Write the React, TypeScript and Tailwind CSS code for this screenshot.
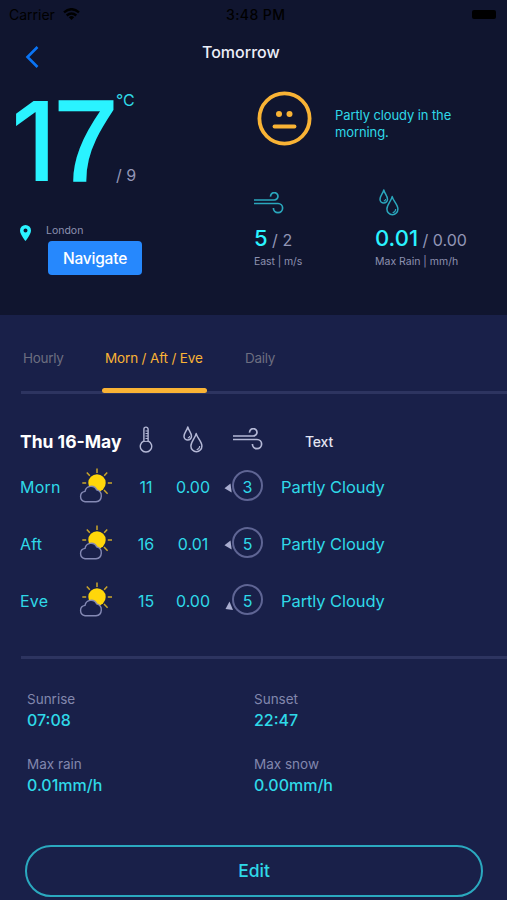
import type { ReactNode } from "react";

function Wind({ className }: { className: string }) {
  return (
    <svg viewBox="0 0 30 22" className={className} fill="none" stroke="currentColor" strokeWidth="1.7">
      <path d="M0 8H20.2A3.7 3.7 0 1 0 16.600 4.600" />
      <path d="M0 11.500H24A4.600 4.600 0 1 1 19.400 16.100" />
    </svg>
  );
}

function Drops({ className }: { className: string }) {
  return (
    <svg viewBox="0 0 20 27" className={className} fill="none" stroke="currentColor" strokeWidth="1.5" strokeLinejoin="round">
      <path d="M4.8 1C4 4.400 1 7 1 10.200A3.750 3.750 0 0 0 8.500 10.200C8.500 7 5.600 4.400 4.800 1Z" />
      <path d="M13.200 7.600C12.200 12 7.900 15.600 7.900 20A5.500 5.800 0 0 0 18.900 20C18.900 15.600 14.200 12 13.200 7.600Z" />
      <path d="M13.600 23.700Q16.600 23 16.700 20M4.800 12.100Q6.600 11.800 6.700 10" strokeWidth="1.100" />
    </svg>
  );
}

function Thermometer({ className }: { className: string }) {
  return (
    <svg viewBox="0 0 14 27" className={className} fill="none" stroke="currentColor" strokeWidth="1.4">
      <path d="M4.900 15V3.200A2.100 2.100 0 0 1 9.100 3.200V15A5.700 5.700 0 1 1 4.900 15Z" />
      <path d="M6.500 5H9M6.500 7.500H9M6.500 10H9M6.500 12.500H9M5 15.400H9" strokeWidth="1" />
    </svg>
  );
}

function SunCloud() {
  return (
    <svg viewBox="0 0 34 36" className="-mt-[3px] h-9 w-[34px]" fill="none">
      <circle cx="18" cy="16" r="8.700" fill="#ffd60a" />
      <path
        d="M18 1.500V6M7.800 5.500L10.800 8.700M28.200 5.500L25.200 8.700M3.300 15.900H7.200M28.800 15.900H33M25 23L28.600 26.800"
        stroke="#c9a52b"
        strokeWidth="1.500"
      />
      <path
        d="M6.100 34.700A5.200 5.200 0 0 1 6 24.400A6.200 6.200 0 0 1 17.700 22.900A6 6 0 0 1 17 34.700Z"
        fill="#192049"
        stroke="#8489b4"
        strokeWidth="1.400"
      />
    </svg>
  );
}

function WindBadge({ value, low }: { value: string; low?: boolean }) {
  return (
    <div className="relative flex h-[31px] w-[31px] items-center justify-center rounded-full border-2 border-[#5f6594] pt-[3px] text-[#2fd9e8]">
      {value}
      <svg viewBox="0 0 8 10" className={low ? "absolute top-[15px] -left-[9px] h-[10px] w-2" : "absolute top-[11px] -left-[10px] h-[10px] w-2"} fill="#a9adcf">
        {low ? <path d="M4.500 0.500L8 9L0.500 8Z" /> : <path d="M0.500 5.300L6.500 0.500L7.700 9.500Z" />}
      </svg>
    </div>
  );
}

const rows = [
  { part: "Morn", temp: "11", rain: "0.00", wind: "3" },
  { part: "Aft", temp: "16", rain: "0.01", wind: "5" },
  { part: "Eve", temp: "15", rain: "0.00", wind: "5", low: true },
];

function Fact({ label, children }: { label: string; children: ReactNode }) {
  return (
    <div className="h-[65px]">
      <div className="pt-px text-[13.500px] leading-[21px] text-[#8287ad]">{label}</div>
      <div className="text-[16px] leading-[21px] font-medium text-[#2fd9e8]">{children}</div>
    </div>
  );
}

export default function App() {
  return (
    <div className="h-[900px] w-[507px] overflow-hidden bg-[#192049] font-['Inter',sans-serif] whitespace-nowrap">
      <header className="h-[315px] bg-[#10152f]">
        <div className="flex h-7 items-center pr-[11px] pl-[9px] text-black">
          <div className="flex w-[217px] items-center gap-2">
            <span className="text-[14px]">Carrier</span>
            <svg viewBox="0 0 17 12" className="h-3 w-[17px]" fill="none" stroke="currentColor" strokeWidth="2.400">
              <path d="M1 4.400Q8.500 -2 16 4.400M3.700 7.500Q8.500 3.400 13.300 7.500" />
              <path d="M5.800 9.200Q8.500 7 11.200 9.200L8.500 12Z" fill="currentColor" stroke="none" />
            </svg>
          </div>
          <span className="text-[14px] font-medium tracking-[0.4px]">3:48 PM</span>
          <span className="ml-auto h-[9px] w-6 rounded-[2px] bg-black" />
        </div>
        <div className="flex h-12 items-center">
          <svg viewBox="0 0 14 22" className="mt-[9px] ml-[25px] h-[22px] w-[14px]" fill="none" stroke="#0a74f5" strokeWidth="2.600">
            <path d="M12.500 1L2.500 11L12.500 21" />
          </svg>
          <h1 className="ml-[163px] text-[16px] font-medium text-[#eceef8]">Tomorrow</h1>
        </div>

        <div className="flex">
          <div className="w-[254px]">
            <div className="flex h-[130px]">
              <div className="flex w-[116px] pl-[11px] leading-[130px] text-[#2af3ff]">
                <span className="w-[43px] text-[110px] font-medium">1</span>
                <span className="font-['Liberation_Sans',sans-serif] text-[115px] tracking-[-3px] [-webkit-text-stroke:2.5px_#2af3ff]">7</span>
              </div>
              <div className="text-[16px]">
                <div className="mt-[14px] leading-5 text-[#2fd9e8]">°C</div>
                <div className="mt-[55px] leading-5 text-[#9296b6]">/ 9</div>
              </div>
            </div>
            <div className="flex pt-[16px] pl-5">
              <svg viewBox="0 0 12 16" className="mt-[3px] h-4 w-3" fill="#2af3ff">
                <path fillRule="evenodd" d="M5.500 0A5.500 5.500 0 0 0 0 5.500C0 9.600 5.500 16 5.500 16S11 9.600 11 5.500A5.500 5.500 0 0 0 5.500 0ZM5.500 3.500A2 2 0 1 1 5.500 7.500A2 2 0 1 1 5.500 3.500Z" />
              </svg>
              <div className="ml-[14px]">
                <div className="h-[19px] pt-px text-[10.500px] leading-4 text-[#8d91b0]">London</div>
                <button className="ml-[2px] block h-[34px] w-[94px] rounded-[4px] bg-[#2688fd] pt-px text-[15.500px] font-medium tracking-[-0.200px] text-white">Navigate</button>
              </div>
            </div>
          </div>

          <div>
            <div className="flex h-[112px]">
              <svg viewBox="0 0 56 56" className="mt-[15px] ml-[2px] h-14 w-14" fill="none" stroke="#f9b335" strokeWidth="3.800">
                <circle cx="28.500" cy="27.500" r="25.100" />
                <path d="M18.500 35.500H38.500" strokeLinecap="round" />
                <circle cx="23" cy="23" r="3" fill="#f9b335" stroke="none" />
                <circle cx="33.500" cy="23" r="3" fill="#f9b335" stroke="none" />
              </svg>
              <p className="mt-[31px] ml-[23px] text-[13px] leading-[17px] tracking-[-0.100px] text-[#2fd9e8]">
                Partly cloudy in the
                <br />
                morning.
              </p>
            </div>
            <div className="flex">
              <div className="w-[121px]">
                <Wind className="mt-1 mb-3 h-[22px] w-[30px] text-[#2aa7bd]" />
                <div className="leading-6 text-[#9296b6]">
                  <span className="text-[22px] font-medium text-[#2af3ff]">5</span>
                  <span className="text-[16px]"> / 2</span>
                </div>
                <div className="text-[10.500px] leading-[19px] tracking-[-0.100px] text-[#8d91b0]">East | m/s</div>
              </div>
              <div>
                <Drops className="mt-[1px] mb-[10px] ml-1 h-[27px] w-5 text-[#2aa7bd]" />
                <div className="leading-6 text-[#9296b6]">
                  <span className="text-[22px] font-medium text-[#2af3ff]">0.01</span>
                  <span className="text-[16px]"> / 0.00</span>
                </div>
                <div className="text-[10.500px] leading-[19px] text-[#8d91b0]">Max Rain | mm/h</div>
              </div>
            </div>
          </div>
        </div>
      </header>

      <nav className="ml-[21px] flex h-[79px] border-b-[3px] border-[#2d3460] pt-[33px] text-[13.500px] leading-[21px] tracking-[-0.150px] text-[#6c6e80]">
        <span className="ml-[2px] w-[79px] tracking-[-0.300px]">Hourly</span>
        <span className="-mb-[2px] flex w-[105px] flex-col justify-between text-[#f9b335]">
          <span className="ml-[3px]">Morn / Aft / Eve</span>
          <span className="h-[5px] rounded-full bg-[#f9b335]" />
        </span>
        <span className="ml-[38px] tracking-[-0.300px]">Daily</span>
      </nav>

      <section className="h-[262px] pl-5 text-[16px]">
        <div className="flex h-[64px] items-center pt-[30px] text-[#b4b8d6]">
          <span className="w-[119px] pt-[3px] text-[17.500px] font-bold text-white">Thu 16-May</span>
          <Thermometer className="-mt-[4px] h-[27px] w-[14px]" />
          <Drops className="-mt-[4px] ml-[30px] h-[27px] w-5" />
          <Wind className="-mt-[4px] ml-[30px] h-[22px] w-[30px]" />
          <span className="ml-[42px] pt-px text-[14px] font-medium tracking-[-0.200px] text-[#e2e4f2]">Text</span>
        </div>
        {rows.map((row) => (
          <div key={row.part} className="flex h-[57px] items-center text-[#2fd9e8]">
            <span className="w-[59px] tracking-[0.200px]">{row.part}</span>
            <SunCloud />
            <span className="ml-[12px] w-[42px] text-center">{row.temp}</span>
            <span className="w-[52px] text-center">{row.rain}</span>
            <span className="-mt-[3px] ml-[13px]">
              <WindBadge value={row.wind} low={row.low} />
            </span>
            <span className="ml-[18px] pt-px text-[16.500px] tracking-[-0.080px]">Partly Cloudy</span>
          </div>
        ))}
      </section>

      <section className="ml-[21px] grid h-[189px] grid-cols-[227px_1fr] content-start border-t-[3px] border-[#2d3460] pt-[29px] pl-[6px]">
        <Fact label="Sunrise">07:08</Fact>
        <Fact label="Sunset">22:47</Fact>
        <Fact label="Max rain">0.01mm/h</Fact>
        <Fact label="Max snow">0.00mm/h</Fact>
      </section>

      <button className="ml-[25px] block h-[52px] w-[458px] rounded-full border-2 border-[#2ba9bf] text-[17.500px] font-medium text-[#2fd9e8]">Edit</button>
    </div>
  );
}
